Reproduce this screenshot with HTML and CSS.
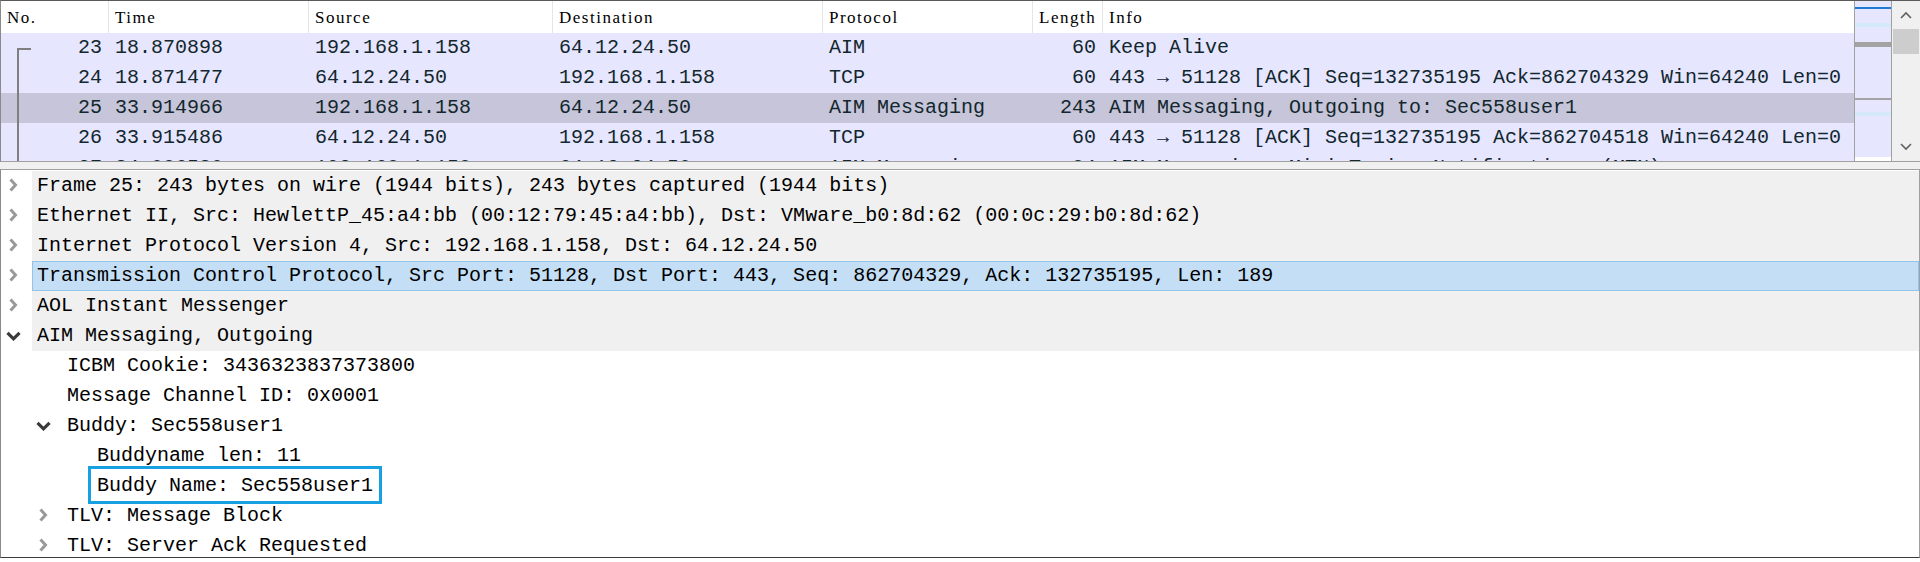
FILE: index.html
```html
<!DOCTYPE html>
<html>
<head>
<meta charset="utf-8">
<link rel="stylesheet" href="styles.css">
</head>
<body>
<div class="app">
  <div class="plist">
    <div class="ptable">
      <div class="phead">
        <span>No.</span><span>Time</span><span>Source</span><span>Destination</span><span>Protocol</span><span>Length</span><span class="last">Info</span>
      </div>
      <div class="prows">
        <div class="prow"><span class="num first">23</span><span>18.870898</span><span>192.168.1.158</span><span>64.12.24.50</span><span>AIM</span><span class="num">60</span><span>Keep Alive</span></div>
        <div class="prow"><span class="num rel">24</span><span>18.871477</span><span>64.12.24.50</span><span>192.168.1.158</span><span>TCP</span><span class="num">60</span><span>443 → 51128 [ACK] Seq=132735195 Ack=862704329 Win=64240 Len=0</span></div>
        <div class="prow sel"><span class="num rel">25</span><span>33.914966</span><span>192.168.1.158</span><span>64.12.24.50</span><span>AIM Messaging</span><span class="num">243</span><span>AIM Messaging, Outgoing to: Sec558user1</span></div>
        <div class="prow"><span class="num rel">26</span><span>33.915486</span><span>64.12.24.50</span><span>192.168.1.158</span><span>TCP</span><span class="num">60</span><span>443 → 51128 [ACK] Seq=132735195 Ack=862704518 Win=64240 Len=0</span></div>
        <div class="prow"><span class="num rel">27</span><span>34.086530</span><span>192.168.1.158</span><span>64.12.24.50</span><span>AIM Messaging</span><span class="num">84</span><span>AIM Messaging, Mini Typing Notifications (MTN)</span></div>
      </div>
    </div>
    <div class="minimap">
      <div class="mm-blue"></div>
      <div class="mm-light mm-a"></div>
      <div class="mm-gray mm-band"></div>
      <div class="mm-gray mm-line"></div>
      <div class="mm-light mm-b"></div>
      <div class="mm-white"></div>
    </div>
    <div class="vscroll">
      <div class="sbtn"><svg width="12" height="8" viewBox="0 0 12 8"><polyline points="1,7 6,2 11,7" fill="none" stroke="#606060" stroke-width="1.6"/></svg></div>
      <div class="thumb"></div>
      <div class="sfill"></div>
      <div class="sbtn"><svg width="12" height="8" viewBox="0 0 12 8"><polyline points="1,1 6,6 11,1" fill="none" stroke="#606060" stroke-width="1.6"/></svg></div>
    </div>
  </div>
  <div class="splitter"></div>
  <div class="details">
    <div class="drow top"><span class="tw"><svg class="col" width="10" height="14" viewBox="0 0 10 14"><polyline points="2.5,1.5 7.5,7 2.5,12.5"/></svg></span><span class="tx">Frame 25: 243 bytes on wire (1944 bits), 243 bytes captured (1944 bits)</span></div>
    <div class="drow top"><span class="tw"><svg class="col" width="10" height="14" viewBox="0 0 10 14"><polyline points="2.5,1.5 7.5,7 2.5,12.5"/></svg></span><span class="tx">Ethernet II, Src: HewlettP_45:a4:bb (00:12:79:45:a4:bb), Dst: VMware_b0:8d:62 (00:0c:29:b0:8d:62)</span></div>
    <div class="drow top"><span class="tw"><svg class="col" width="10" height="14" viewBox="0 0 10 14"><polyline points="2.5,1.5 7.5,7 2.5,12.5"/></svg></span><span class="tx">Internet Protocol Version 4, Src: 192.168.1.158, Dst: 64.12.24.50</span></div>
    <div class="drow top sel"><span class="tw"><svg class="col" width="10" height="14" viewBox="0 0 10 14"><polyline points="2.5,1.5 7.5,7 2.5,12.5"/></svg></span><span class="tx">Transmission Control Protocol, Src Port: 51128, Dst Port: 443, Seq: 862704329, Ack: 132735195, Len: 189</span></div>
    <div class="drow top"><span class="tw"><svg class="col" width="10" height="14" viewBox="0 0 10 14"><polyline points="2.5,1.5 7.5,7 2.5,12.5"/></svg></span><span class="tx">AOL Instant Messenger</span></div>
    <div class="drow top"><span class="tw"><svg class="exp" width="15" height="10" viewBox="0 0 15 10"><polyline points="1.5,1.8 7.5,7.8 13.5,1.8"/></svg></span><span class="tx">AIM Messaging, Outgoing</span></div>
    <div class="drow l1"><span class="tw"></span><span class="tx">ICBM Cookie: 3436323837373800</span></div>
    <div class="drow l1"><span class="tw"></span><span class="tx">Message Channel ID: 0x0001</span></div>
    <div class="drow l1"><span class="tw"><svg class="exp" width="15" height="10" viewBox="0 0 15 10"><polyline points="1.5,1.8 7.5,7.8 13.5,1.8"/></svg></span><span class="tx">Buddy: Sec558user1</span></div>
    <div class="drow l2"><span class="tw"></span><span class="tx">Buddyname len: 11</span></div>
    <div class="drow l2"><span class="tw"></span><span class="tx"><span class="hl">Buddy Name: Sec558user1</span></span></div>
    <div class="drow l1"><span class="tw"><svg class="col" width="10" height="14" viewBox="0 0 10 14"><polyline points="2.5,1.5 7.5,7 2.5,12.5"/></svg></span><span class="tx">TLV: Message Block</span></div>
    <div class="drow l1"><span class="tw"><svg class="col" width="10" height="14" viewBox="0 0 10 14"><polyline points="2.5,1.5 7.5,7 2.5,12.5"/></svg></span><span class="tx">TLV: Server Ack Requested</span></div>
  </div>
</div>
</body>
</html>
```

FILE: styles.css
```css
* { box-sizing: border-box; margin: 0; padding: 0; }
html, body { width: 1920px; height: 562px; overflow: hidden; background: #fff; }
body { font-family: "Liberation Mono", "DejaVu Sans Mono", monospace; }

.app { display: flex; flex-direction: column; height: 562px; }

/* packet list */
.plist {
  display: flex; flex: none; height: 162px;
  border-top: 1px solid #5a5a5a;
  border-bottom: 1px solid #a0a0a0;
  border-left: 1px solid #8a8a8a;
}
.ptable { flex: 1; min-width: 0; overflow: hidden; display: flex; flex-direction: column; }

.phead {
  display: grid;
  grid-template-columns: 108px 200px 244px 270px 210px 70px 1fr;
  height: 32px; flex: none; background: #fff;
  font-family: "Liberation Serif", serif; font-size: 17px; letter-spacing: 1.5px;
  color: #000;
}
.phead span {
  border-right: 1px solid #e5e5e5;
  padding: 2px 0 0 6px;
  line-height: 30px; white-space: nowrap; overflow: hidden;
}
.phead span.last { border-right: none; }

.prows { flex: 1; overflow: hidden; }
.prow {
  display: grid;
  grid-template-columns: 108px 200px 244px 270px 210px 70px 1fr;
  height: 30px; line-height: 30px;
  background: #e7e6ff; color: #12272e;
  font-size: 20px; white-space: pre;
}
.prow.sel { background: #c6c5d9; }
.prow span { padding: 0 7px 0 6px; overflow: hidden; }
.prow span.num { text-align: right; }
.prow span.first, .prow span.rel { position: relative; }
.prow span.rel::before {
  content: ""; position: absolute; left: 16px; top: 0; bottom: 0; width: 2px; background: #7f7f7f;
}
.prow span.first::before {
  content: ""; position: absolute; left: 16px; top: 15px; bottom: 0; width: 2px; background: #7f7f7f;
}
.prow span.first::after {
  content: ""; position: absolute; left: 16px; top: 15px; width: 14px; height: 2px; background: #7f7f7f;
}

/* minimap */
.minimap {
  width: 38px; flex: none; position: relative;
  background: #e7e6ff;
  border-left: 1px solid #a0a0a0; border-right: 1px solid #a0a0a0;
}
.minimap div { position: absolute; left: 0; right: 0; }
.mm-blue { top: 6px; height: 2px; background: #1f7bd6; }
.mm-light { height: 4px; background: #d4eafa; }
.mm-a { top: 22px; }
.mm-b { top: 111px; }
.mm-gray { background: #a3a3a3; }
.mm-band { top: 41px; height: 5px; }
.mm-line { top: 97px; height: 2px; }
.mm-white { top: 156px; height: 4px; background: #fff; }

/* scrollbar */
.vscroll { width: 28px; flex: none; background: #f0f0f0; display: flex; flex-direction: column; }
.sbtn { height: 28px; display: flex; align-items: center; justify-content: center; flex: none; }
.thumb { height: 25px; margin: 0 1px 0 1px; background: #cdcdcd; flex: none; }
.sfill { flex: 1; }

.splitter { height: 7px; flex: none; background: #f0f0f0; }

/* details */
.details {
  height: 389px; flex: none; overflow: hidden;
  border-top: 1px solid #a0a0a0;
  border-left: 1px solid #8a8a8a;
  border-right: 1px solid #a0a0a0;
  border-bottom: 1px solid #3c3c3c;
  padding-top: 1px;
  font-size: 20px; color: #000;
}
.drow { display: flex; height: 30px; line-height: 30px; white-space: pre; flex: none; }
.drow.l1 { padding-left: 30px; }
.drow.l2 { padding-left: 60px; }
.tw { width: 31px; flex: none; display: flex; align-items: center; }
.tw svg { display: block; fill: none; }
.tw svg.col { margin-left: 7px; margin-top: -2px; }
.tw svg.col polyline { stroke: #999999; stroke-width: 3; }
.tw svg.exp { margin-left: 5px; }
.tw svg.exp polyline { stroke: #3a3a3a; stroke-width: 3.2; }
.tx { padding-left: 5px; }
.drow.top .tx { flex: 1; background: #f0f0f0; }
.drow.top.sel .tx { background: #c4dff5; border: 1px solid #92c5ee; padding-left: 4px; line-height: 28px; }

.hl { position: relative; display: inline-block; height: 30px; }
.hl::after {
  content: ""; position: absolute;
  left: -9px; right: -9px; top: -5px; bottom: -3px;
  border: 3px solid #17a0e2;
}
```
